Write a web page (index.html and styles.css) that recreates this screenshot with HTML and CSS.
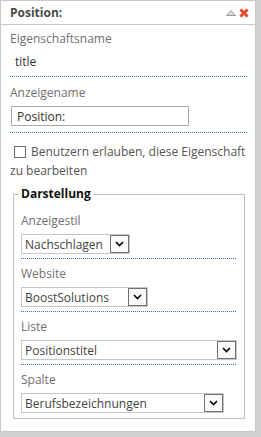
FILE: index.html
```html
<!DOCTYPE html>
<html lang="de">
<head>
  <meta charset="UTF-8">
  <meta name="viewport" content="width=device-width, initial-scale=1.0">
  <title>Position</title>
  <link rel="stylesheet" href="styles.css">
</head>
<body>
  <div class="panel">
    <div class="panel-head">
      <span class="panel-title">Position:</span>
      <span class="panel-tools">
        <svg class="tool-collapse" width="10" height="6" viewBox="0 0 10 6">
          <polygon points="5,0.5 9.5,5.5 0.5,5.5" fill="#dcdcdc" stroke="#9a9a9a" stroke-width="1"/>
        </svg>
        <svg class="tool-close" width="10" height="10" viewBox="0 0 10 10">
          <line x1="1.5" y1="1.5" x2="8.5" y2="8.5" stroke="#f08a78" stroke-width="3.4"/>
          <line x1="8.5" y1="1.5" x2="1.5" y2="8.5" stroke="#f08a78" stroke-width="3.4"/>
          <line x1="1.5" y1="1.5" x2="8.5" y2="8.5" stroke="#e2412a" stroke-width="2"/>
          <line x1="8.5" y1="1.5" x2="1.5" y2="8.5" stroke="#e2412a" stroke-width="2"/>
        </svg>
      </span>
    </div>

    <div class="panel-body">
      <div class="field">
        <div class="field-label">Eigenschaftsname</div>
        <div class="field-value">title</div>
      </div>

      <div class="field field-input">
        <div class="field-label">Anzeigename</div>
        <input class="text-input" type="text" value="Position:">
      </div>

      <div class="check-row">
        <span class="check-box"></span>Benutzern erlauben, diese Eigenschaft zu bearbeiten
      </div>

      <fieldset class="group">
        <legend>Darstellung</legend>

        <div class="field">
          <div class="field-label">Anzeigestil</div>
          <div class="select select-style">
            <span class="select-text">Nachschlagen</span>
            <span class="select-btn"><svg width="9" height="6" viewBox="0 0 9 6"><polyline points="1,1 4.5,4.5 8,1" fill="none" stroke="#000" stroke-width="1.6"/></svg></span>
          </div>
        </div>

        <div class="field">
          <div class="field-label">Website</div>
          <div class="select select-site">
            <span class="select-text">BoostSolutions</span>
            <span class="select-btn"><svg width="9" height="6" viewBox="0 0 9 6"><polyline points="1,1 4.5,4.5 8,1" fill="none" stroke="#000" stroke-width="1.6"/></svg></span>
          </div>
        </div>

        <div class="field">
          <div class="field-label">Liste</div>
          <div class="select select-list">
            <span class="select-text">Positionstitel</span>
            <span class="select-btn"><svg width="9" height="6" viewBox="0 0 9 6"><polyline points="1,1 4.5,4.5 8,1" fill="none" stroke="#000" stroke-width="1.6"/></svg></span>
          </div>
        </div>

        <div class="field field-last">
          <div class="field-label">Spalte</div>
          <div class="select select-column">
            <span class="select-text">Berufsbezeichnungen</span>
            <span class="select-btn"><svg width="9" height="6" viewBox="0 0 9 6"><polyline points="1,1 4.5,4.5 8,1" fill="none" stroke="#000" stroke-width="1.6"/></svg></span>
          </div>
        </div>
      </fieldset>
    </div>
  </div>
</body>
</html>
```

FILE: styles.css
```css
body {
  margin: 0;
  background-color: #d0d0d0;
  font-family: "Open Sans", "Noto Sans", sans-serif;
  font-size: 12px;
  color: #444;
}

.panel {
  width: 256px;
  height: 432px;
  box-sizing: border-box;
  background: #ffffff;
  border: 1px solid #c8c8c8;
}

.panel-head {
  height: 23px;
  border-bottom: 1px solid #c8c8c8;
  padding: 0 6px 0 9px;
  display: flex;
  align-items: center;
  justify-content: space-between;
}

.panel-title {
  font-weight: bold;
  color: #4a4a4a;
}

.panel-tools {
  display: flex;
  align-items: center;
  gap: 3px;
}

.tool-collapse {
  margin-top: 1px;
}

.panel-body {
  padding: 0 8px 0 9px;
}

.field {
  padding: 4px 0 4px;
  border-bottom: 1px dotted #3b6cc0;
}

.field-input {
  padding: 6px 0 6px;
}

.field-label {
  line-height: 20px;
  color: #707070;
}

.field-value {
  margin-top: 3px;
  padding-left: 5px;
  line-height: 20px;
  color: #333;
}

.text-input {
  display: block;
  margin: 3px 0 0 1px;
  width: 178px;
  height: 20px;
  box-sizing: border-box;
  border: 1px solid #ababab;
  padding: 0 5px;
  font-family: inherit;
  font-size: 12px;
  color: #333;
  outline: none;
}

.check-row {
  margin-top: 9px;
  line-height: 19px;
  color: #555;
}

.check-box {
  display: inline-block;
  width: 12px;
  height: 12px;
  box-sizing: border-box;
  border: 1px solid #707070;
  background: #fff;
  margin: 0 5px 0 4px;
  vertical-align: -2px;
}

.group {
  margin: 5px 2px 0 3px;
  padding: 3px 8px 5px 7px;
  border: 1px solid #c0c0c0;
  min-width: 0;
}

.group legend {
  padding: 0 2px;
  margin-left: -2px;
  line-height: 18px;
  font-weight: bold;
  color: #111;
}

.group .field {
  padding: 5px 0 4px;
}

.group .field-last {
  border-bottom: none;
  padding-bottom: 0;
}

.select {
  display: flex;
  align-items: center;
  margin-top: 3px;
  height: 20px;
  box-sizing: border-box;
  border: 1px solid #c6c6c6;
  padding-left: 3px;
  color: #444;
}

.select-text {
  flex: 1;
  white-space: nowrap;
  overflow: hidden;
}

.select-btn {
  width: 19px;
  height: 18px;
  box-sizing: border-box;
  border: 1px solid #707070;
  background: #fafafa;
  display: flex;
  align-items: center;
  justify-content: center;
}

.select-style { width: 109px; }
.select-site { width: 127px; }
.select-list { width: 216px; }
.select-column { width: 203px; }
```
